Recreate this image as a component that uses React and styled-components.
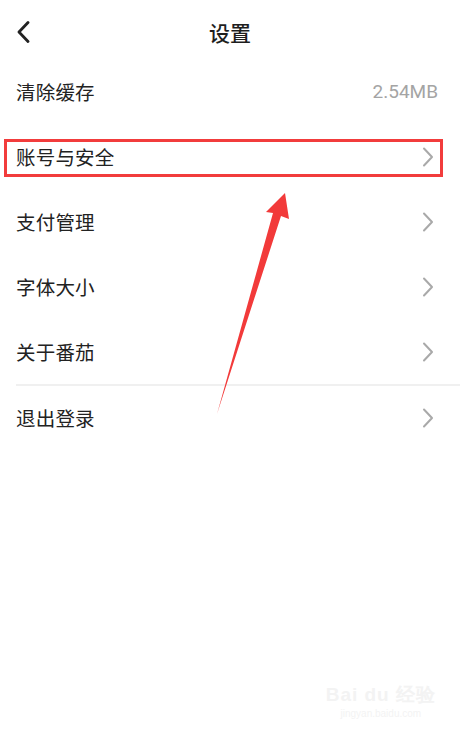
import React from "react";
import styled, { createGlobalStyle } from "styled-components";

const Global = createGlobalStyle`
  html, body { margin: 0; padding: 0; background: #ffffff; }
  body { font-family: "Noto Sans CJK SC", "Noto Sans", sans-serif; }
`;

const Page = styled.div`
  position: relative;
  width: 460px;
  height: 735px;
  background: #ffffff;
  overflow: hidden;
`;

const Header = styled.div`
  display: flex;
  align-items: center;
  justify-content: center;
  position: relative;
  height: 59px;
  box-sizing: border-box;
  padding-top: 6px;
`;

const BackButton = styled.div`
  position: absolute;
  left: 14px;
  top: 20px;
  width: 18px;
  height: 24px;
  display: flex;
  align-items: center;
  justify-content: center;
`;

const Title = styled.div`
  font-size: 21px;
  font-weight: 500;
  color: #1e1e1e;
  line-height: 1;
`;

const List = styled.div`
  display: flex;
  flex-direction: column;
`;

const Row = styled.div`
  display: flex;
  align-items: center;
  justify-content: space-between;
  height: ${(p) => (p.$afterDivider ? "63px" : "65px")};
  padding: 0 26px 0 16px;
  box-sizing: border-box;
`;

const Divider = styled.div`
  height: 2px;
  margin-left: 16px;
  background: #f0f0f0;
`;

const Label = styled.span`
  font-size: 19.5px;
  color: #222222;
  letter-spacing: 0.2px;
`;

const Value = styled.span`
  font-family: "Roboto", "Noto Sans", sans-serif;
  font-size: 19px;
  color: #a4a4a4;
  margin-right: -4px;
`;

const Highlight = styled.div`
  position: absolute;
  left: 4px;
  top: 139px;
  width: 439px;
  height: 38px;
  border: 3px solid #f23c3c;
  box-sizing: border-box;
`;

const Overlay = styled.svg`
  position: absolute;
  left: 0;
  top: 0;
  pointer-events: none;
`;

const Watermark = styled.div`
  position: absolute;
  right: 24px;
  bottom: 16px;
  display: flex;
  flex-direction: column;
  align-items: center;
  color: #f3f3f3;
  font-family: "Liberation Sans", sans-serif;
`;

const WmTop = styled.div`
  font-size: 19px;
  font-weight: bold;
  letter-spacing: 1px;
`;

const WmBottom = styled.div`
  font-size: 10px;
`;

const Chevron = () => (
  <svg width="12" height="20" viewBox="0 0 12 20">
    <path d="M2 1.5 L10 10 L2 18.5" fill="none" stroke="#a9a9a9" strokeWidth="2" strokeLinecap="round" strokeLinejoin="round" />
  </svg>
);

const items = [
  { label: "清除缓存", value: "2.54MB" },
  { label: "账号与安全" },
  { label: "支付管理" },
  { label: "字体大小" },
  { label: "关于番茄" },
  { label: "退出登录", divider: true },
];

export default function App() {
  return (
    <Page>
      <Global />
      <Header>
        <BackButton>
          <svg width="14" height="22" viewBox="0 0 14 22">
            <path d="M12 1.5 L3 11 L12 20.5" fill="none" stroke="#222" strokeWidth="2.8" strokeLinecap="round" strokeLinejoin="round" />
          </svg>
        </BackButton>
        <Title>设置</Title>
      </Header>
      <List>
        {items.map((it) => (
          <React.Fragment key={it.label}>
            {it.divider && <Divider />}
            <Row $afterDivider={it.divider}>
              <Label>{it.label}</Label>
              {it.value ? <Value>{it.value}</Value> : <Chevron />}
            </Row>
          </React.Fragment>
        ))}
      </List>
      <Highlight />
      <Overlay width="460" height="735" viewBox="0 0 460 735">
        <polygon
          points="217,414 273,213 266,212 285,193 289,219 281,216"
          fill="#f23a3a"
        />
      </Overlay>
      <Watermark>
        <WmTop>Bai du 经验</WmTop>
        <WmBottom>jingyan.baidu.com</WmBottom>
      </Watermark>
    </Page>
  );
}
